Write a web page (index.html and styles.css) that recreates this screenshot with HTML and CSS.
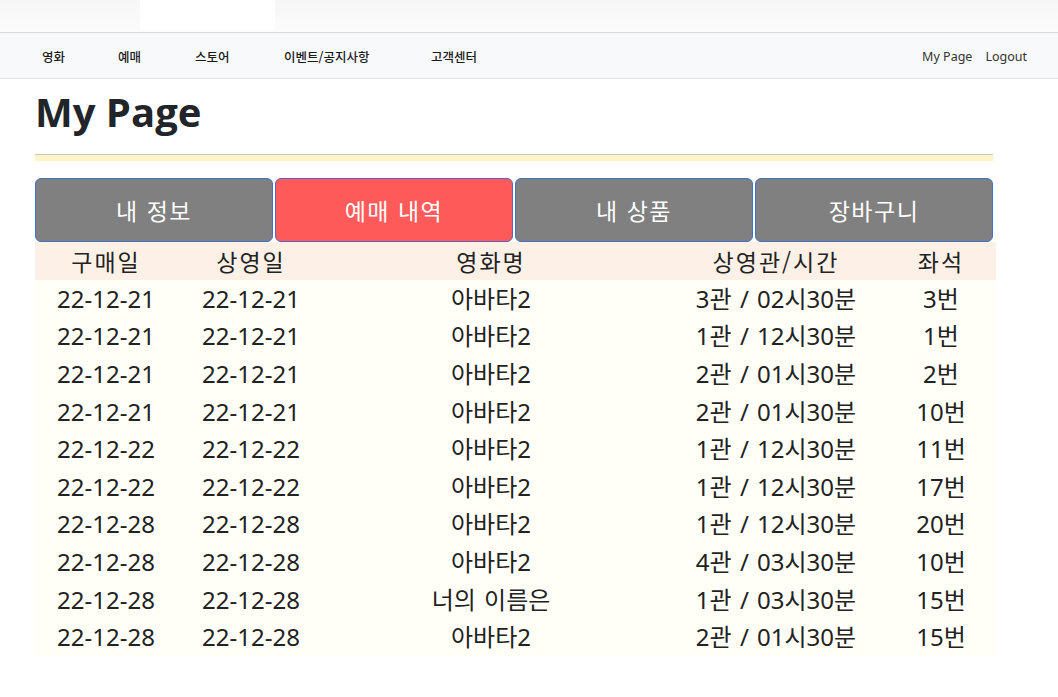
FILE: index.html
```html
<!DOCTYPE html>
<html lang="ko">
<head>
<meta charset="utf-8">
<title>My Page</title>
<link rel="stylesheet" href="styles.css">
</head>
<body>
<div class="topstrip"><div class="tab"></div></div>
<nav class="navbar">
  <ul class="menu">
    <li class="m1">영화</li>
    <li class="m2">예매</li>
    <li class="m3">스토어</li>
    <li class="m4">이벤트/공지사항</li>
    <li class="m5">고객센터</li>
  </ul>
  <ul class="user">
    <li>My Page</li>
    <li>Logout</li>
  </ul>
</nav>
<main class="container">
  <h1 class="title">My Page</h1>
  <div class="rule"></div>
  <div class="tabs">
    <button class="tabbtn">내 정보</button>
    <button class="tabbtn active">예매 내역</button>
    <button class="tabbtn">내 상품</button>
    <button class="tabbtn">장바구니</button>
  </div>
  <table class="list">
    <colgroup>
      <col class="c1"><col class="c2"><col class="c3"><col class="c4"><col class="c5">
    </colgroup>
    <thead>
      <tr><th>구매일</th><th>상영일</th><th>영화명</th><th>상영관/시간</th><th>좌석</th></tr>
    </thead>
    <tbody>
      <tr><td>22-12-21</td><td>22-12-21</td><td>아바타2</td><td>3관 / 02시30분</td><td>3번</td></tr>
      <tr><td>22-12-21</td><td>22-12-21</td><td>아바타2</td><td>1관 / 12시30분</td><td>1번</td></tr>
      <tr><td>22-12-21</td><td>22-12-21</td><td>아바타2</td><td>2관 / 01시30분</td><td>2번</td></tr>
      <tr><td>22-12-21</td><td>22-12-21</td><td>아바타2</td><td>2관 / 01시30분</td><td>10번</td></tr>
      <tr><td>22-12-22</td><td>22-12-22</td><td>아바타2</td><td>1관 / 12시30분</td><td>11번</td></tr>
      <tr><td>22-12-22</td><td>22-12-22</td><td>아바타2</td><td>1관 / 12시30분</td><td>17번</td></tr>
      <tr><td>22-12-28</td><td>22-12-28</td><td>아바타2</td><td>1관 / 12시30분</td><td>20번</td></tr>
      <tr><td>22-12-28</td><td>22-12-28</td><td>아바타2</td><td>4관 / 03시30분</td><td>10번</td></tr>
      <tr><td>22-12-28</td><td>22-12-28</td><td>너의 이름은</td><td>1관 / 03시30분</td><td>15번</td></tr>
      <tr><td>22-12-28</td><td>22-12-28</td><td>아바타2</td><td>2관 / 01시30분</td><td>15번</td></tr>
    </tbody>
  </table>
</main>
</body>
</html>
```

FILE: styles.css
```css
* { box-sizing: border-box; }
html, body { margin: 0; padding: 0; background: #fff; }
body {
  font-family: "Noto Sans", "Noto Sans CJK KR", sans-serif;
  color: #212529;
}
.topstrip {
  height: 32px;
  background: linear-gradient(#f6f6f6, #fcfcfc);
  padding-left: 140px;
}
.tab { width: 135px; height: 30px; background: #fff; }

.navbar {
  height: 47px;
  background: #f8f9fa;
  border-top: 1px solid #d9dadb;
  border-bottom: 1px solid #dfe2e5;
  display: flex;
  align-items: center;
  justify-content: space-between;
  padding: 1px 31px 0 42px;
}
.menu, .user { list-style: none; margin: 0; padding: 0; display: flex; align-items: center; }
.menu li {
  font-family: "Noto Sans CJK KR", sans-serif;
  font-size: 12.5px;
  font-weight: 500;
  color: #1a1a1a;
}
.menu .m1 { width: 76px; }
.menu .m2 { width: 77px; }
.menu .m3 { width: 89px; }
.menu .m4 { width: 147px; }
.user { gap: 13px; }
.user li { font-size: 12.5px; color: #333; }

.container { padding: 0 0 0 35px; width: 1000px; }
.title {
  margin: 0;
  padding: 8px 0 0 0;
  height: 75px;
  font-family: "Open Sans", sans-serif;
  font-weight: 700;
  font-size: 40px;
  line-height: 50px;
  color: #212529;
}
.rule {
  width: 958px;
  height: 7px;
  border-top: 1px solid #c8c8c8;
  background: #fcf4c6;
}
.tabs {
  margin-top: 17px;
  width: 958px;
  display: flex;
  gap: 2px;
}
.tabbtn {
  flex: 1;
  height: 64px;
  background: #808080;
  border: 1.5px solid #3f72c9;
  border-radius: 6px;
  color: #fff;
  font-family: "Noto Sans CJK KR", sans-serif;
  font-size: 23px;
  letter-spacing: 1.5px;
  padding: 0 0 1px;
}
.tabbtn.active { background: #ff5a5a; border-color: #5b64c4; }

.list {
  width: 961px;
  table-layout: fixed;
  border-collapse: collapse;
  font-family: "Noto Sans", "Noto Sans CJK KR", sans-serif;
  font-size: 24px;
  color: #222;
}
.c1 { width: 142px; }
.c2 { width: 148px; }
.c3 { width: 332px; }
.c4 { width: 238px; }
.c5 { width: 101px; }
.list th, .list td {
  padding: 0;
  text-align: center;
  font-weight: 400;
  white-space: nowrap;
  line-height: 30px;
}
.list td { word-spacing: 2px; }
.list th:last-child, .list td:last-child { padding-right: 9px; }
.list thead tr { background: #fdf0e6; height: 38px; }
.list th { font-family: "Noto Sans CJK KR", sans-serif; font-size: 23px; letter-spacing: 2px; }
.list tbody tr { background: #fffff8; height: 37.6px; }
```
